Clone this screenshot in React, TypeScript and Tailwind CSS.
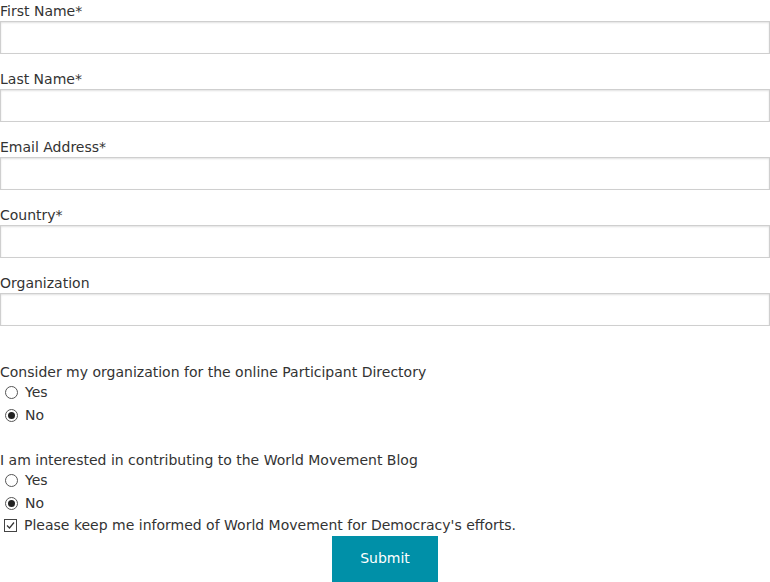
const fields = ["First Name*", "Last Name*", "Email Address*", "Country*", "Organization"];

const Radio = ({ label, checked }: { label: string; checked?: boolean }) => (
  <div className="flex items-center h-[23px]">
    <span className="ml-[5px] w-[13px] h-[13px] rounded-full border border-[#555] bg-white flex items-center justify-center">
      {checked && <span className="w-[7px] h-[7px] rounded-full bg-[#222]" />}
    </span>
    <span className="ml-[7px]">{label}</span>
  </div>
);

const RadioGroup = ({ question }: { question: string }) => (
  <div>
    <div className="leading-[22px] h-[20px]">{question}</div>
    <Radio label="Yes" />
    <Radio label="No" checked />
  </div>
);

export default function App() {
  return (
    <div className="w-[770px] h-[582px] overflow-hidden bg-white text-[#333] text-[14px] font-['DejaVu_Sans',Verdana,sans-serif]">
      <form className="flex flex-col">
        {fields.map((f) => (
          <div key={f} className="mb-[14px]">
            <label className="block leading-[23px] h-[21px]">{f}</label>
            <input
              type="text"
              className="block w-full h-[33px] border border-[#cfcfcf] bg-white shadow-[inset_0_1px_2px_rgba(0,0,0,0.12)] outline-none"
            />
          </div>
        ))}
        <div className="mt-[21px]">
          <RadioGroup question="Consider my organization for the online Participant Directory" />
        </div>
        <div className="mt-[22px]">
          <RadioGroup question="I am interested in contributing to the World Movement Blog" />
        </div>
        <div className="flex items-center h-[21px]">
          <svg width="14" height="14" viewBox="0 0 14 14" className="ml-[4px]">
            <rect x="0.5" y="0.5" width="12" height="12" fill="white" stroke="#444" />
            <path d="M3 6.5 L5.5 9 L10 3.5" fill="none" stroke="#333" strokeWidth="1.2" />
          </svg>
          <span className="ml-[6px]">Please keep me informed of World Movement for Democracy's efforts.</span>
        </div>
        <div className="flex justify-center">
          <button type="button" className="w-[106px] h-[46px] pb-[1px] bg-[#0090a8] text-white text-[14px]">
            Submit
          </button>
        </div>
      </form>
    </div>
  );
}
